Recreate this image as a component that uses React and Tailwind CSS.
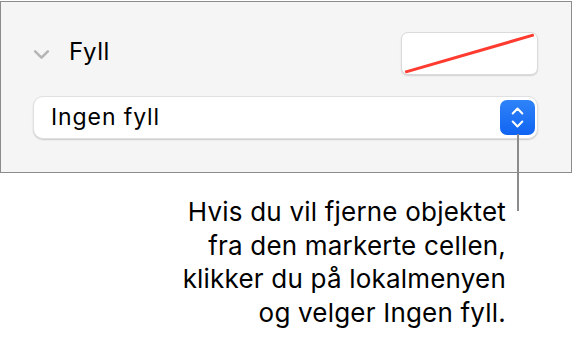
import React from "react";

// Small chevron used in the disclosure and the popup stepper
function Chevron({ dir = "down", className = "", width = "2.4" }) {
  const d = dir === "down" ? "M2 2 L8 8 L14 2" : "M2 8 L8 2 L14 8";
  return (
    <svg viewBox="0 0 16 10" className={className} fill="none">
      <path d={d} stroke="currentColor" strokeWidth={width} strokeLinecap="round" strokeLinejoin="round" />
    </svg>
  );
}

export default function App() {
  return (
    <div
      className="relative w-[572px] h-[343px] bg-white overflow-hidden text-black"
      style={{ fontFamily: 'Inter, "Liberation Sans", Arial, sans-serif' }}
    >
      {/* Inspector panel */}
      <div className="mt-px h-[172px] border border-[#8c8c8c] bg-[#f5f5f5] pl-[32px] pr-[33px] pt-[30px]">
        <div className="flex items-center h-[43px]">
          <Chevron dir="down" className="w-[17px] h-[11px] text-[#b5b5b5] mt-[2px]" />
          <span className="ml-[19px] text-[24px] tracking-[0.6px] leading-none mb-[3px]">Fyll</span>
          <div className="ml-auto w-[137px] h-[43px] rounded-[7px] bg-white border border-[#dadada] shadow-[0_1px_1.5px_rgba(0,0,0,0.15)] overflow-hidden">
            <svg viewBox="0 0 137 43" className="w-full h-full">
              <line x1="1" y1="41" x2="136" y2="2" stroke="#ff3b30" strokeWidth="3.2" />
            </svg>
          </div>
        </div>

        {/* Popup menu */}
        <div className="mt-[21px] h-[43px] rounded-[10px] bg-white border border-[#e0e0e0] shadow-[0_1px_1.5px_rgba(0,0,0,0.18)] flex items-center pl-[17px] pr-[2px]">
          <span className="text-[23px] tracking-[0.9px] leading-none">Ingen fyll</span>
          <div className="ml-auto w-[35px] h-[35px] rounded-[7px] bg-gradient-to-b from-[#2f83f8] to-[#0f63f2] flex flex-col items-center justify-center gap-[5px] text-white">
            <Chevron dir="up" width="2.6" className="w-[13px] h-[8px]" />
            <Chevron dir="down" width="2.6" className="w-[13px] h-[8px]" />
          </div>
        </div>
      </div>

      {/* Callout leader */}
      <div className="absolute left-[517px] top-[134px] w-[2px] h-[77px] bg-[#8c8c8c]" />

      {/* Callout text */}
      <div className="mt-[22px] pr-[66px] text-right text-[26px] tracking-[0.2px] leading-[33.5px]">
        Hvis du vil fjerne objektet
        <br />
        fra den markerte cellen,
        <br />
        klikker du på lokalmenyen
        <br />
        og velger Ingen fyll.
      </div>
    </div>
  );
}
